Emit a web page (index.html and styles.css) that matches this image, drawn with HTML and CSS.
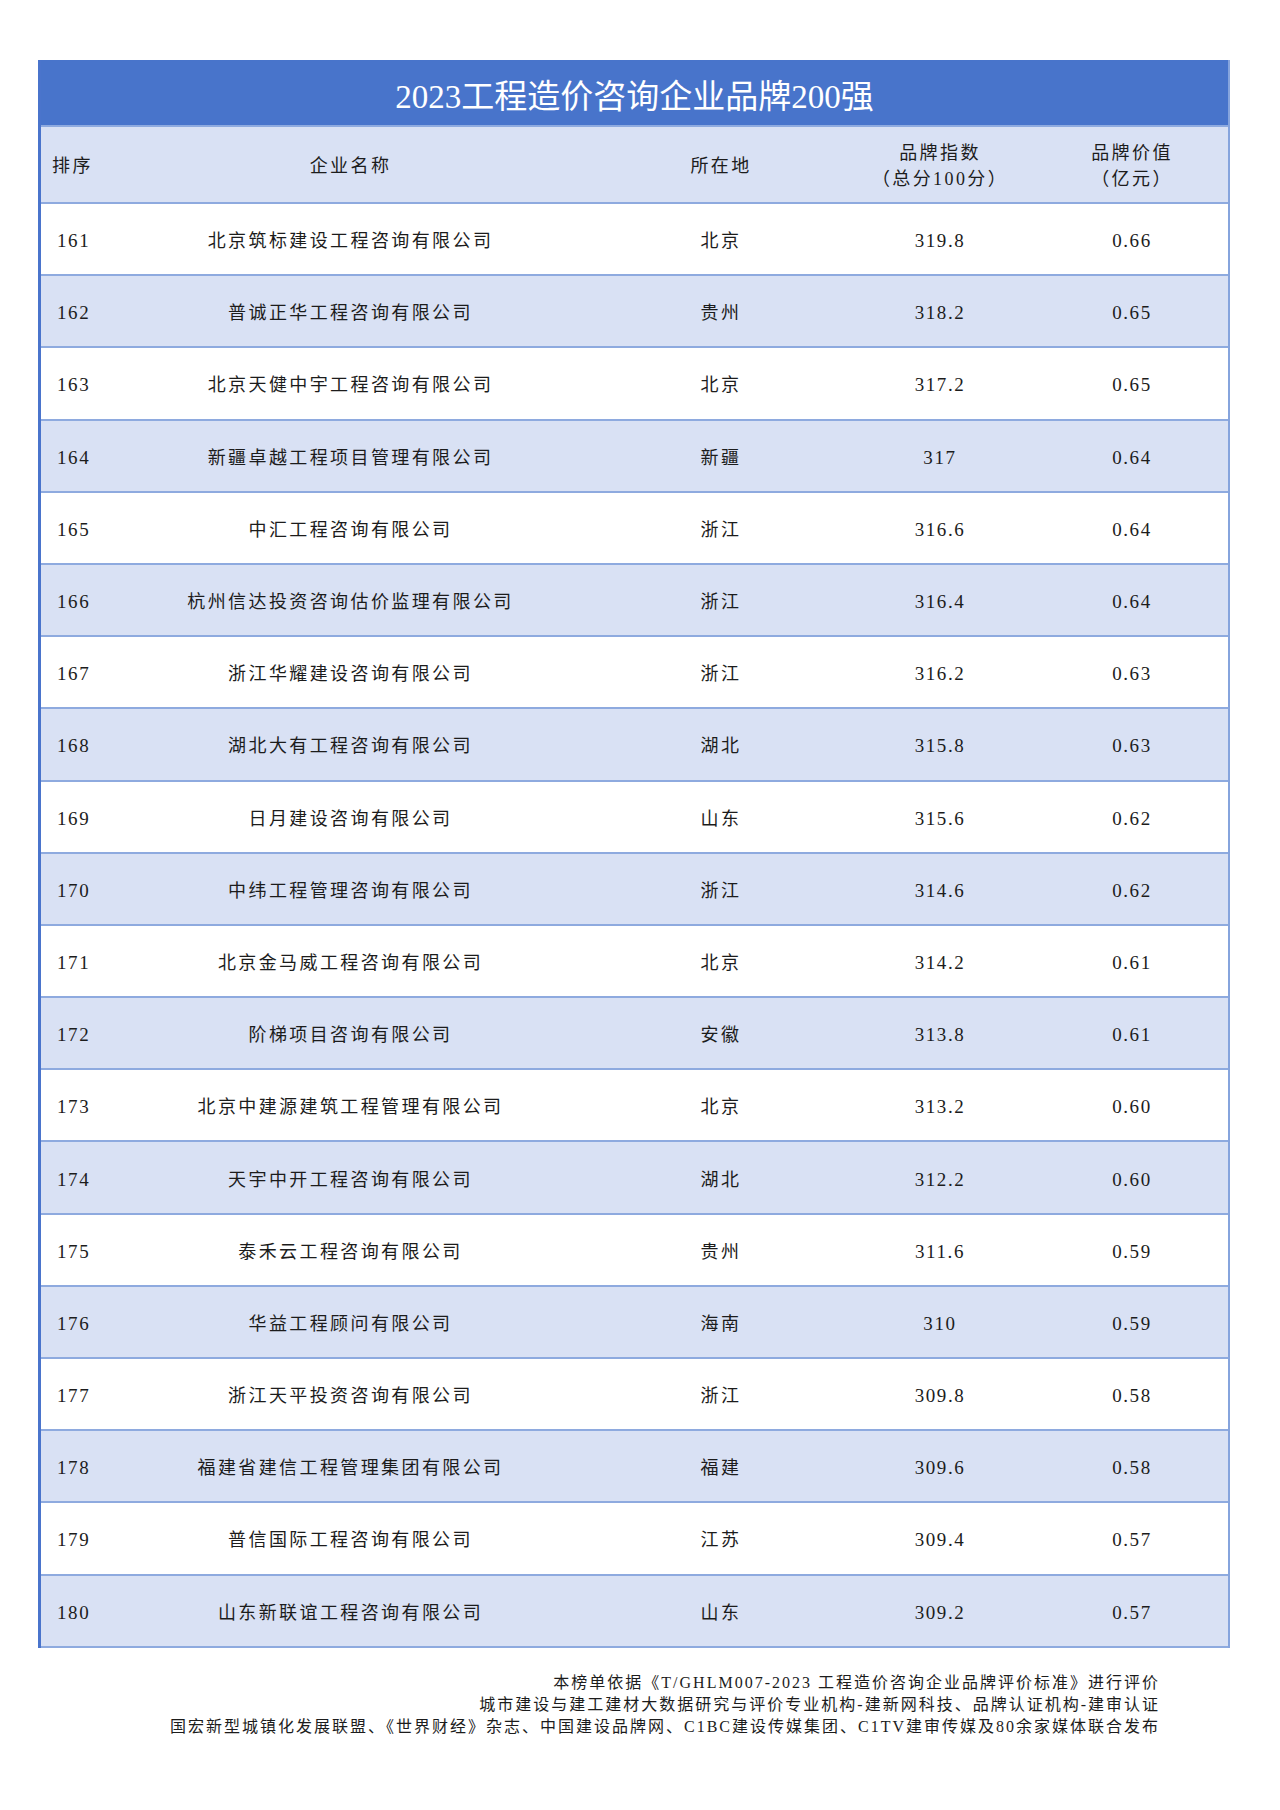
FILE: index.html
```html
<!DOCTYPE html>
<html lang="zh-CN">
<head>
<meta charset="utf-8">
<title>2023工程造价咨询企业品牌200强</title>
<link rel="stylesheet" href="styles.css">
</head>
<body>
<div class="sheet">
  <div class="title">2023工程造价咨询企业品牌200强</div>
  <div class="head">
    <div class="c rank">排序</div>
    <div class="c">企业名称</div>
    <div class="c">所在地</div>
    <div class="c">品牌指数<br>（总分100分）</div>
    <div class="c">品牌价值<br>（亿元）</div>
  </div>
  <div class="row"><div class="c rank">161</div><div class="c">北京筑标建设工程咨询有限公司</div><div class="c">北京</div><div class="c">319.8</div><div class="c">0.66</div></div>
  <div class="row alt"><div class="c rank">162</div><div class="c">普诚正华工程咨询有限公司</div><div class="c">贵州</div><div class="c">318.2</div><div class="c">0.65</div></div>
  <div class="row"><div class="c rank">163</div><div class="c">北京天健中宇工程咨询有限公司</div><div class="c">北京</div><div class="c">317.2</div><div class="c">0.65</div></div>
  <div class="row alt"><div class="c rank">164</div><div class="c">新疆卓越工程项目管理有限公司</div><div class="c">新疆</div><div class="c">317</div><div class="c">0.64</div></div>
  <div class="row"><div class="c rank">165</div><div class="c">中汇工程咨询有限公司</div><div class="c">浙江</div><div class="c">316.6</div><div class="c">0.64</div></div>
  <div class="row alt"><div class="c rank">166</div><div class="c">杭州信达投资咨询估价监理有限公司</div><div class="c">浙江</div><div class="c">316.4</div><div class="c">0.64</div></div>
  <div class="row"><div class="c rank">167</div><div class="c">浙江华耀建设咨询有限公司</div><div class="c">浙江</div><div class="c">316.2</div><div class="c">0.63</div></div>
  <div class="row alt"><div class="c rank">168</div><div class="c">湖北大有工程咨询有限公司</div><div class="c">湖北</div><div class="c">315.8</div><div class="c">0.63</div></div>
  <div class="row"><div class="c rank">169</div><div class="c">日月建设咨询有限公司</div><div class="c">山东</div><div class="c">315.6</div><div class="c">0.62</div></div>
  <div class="row alt"><div class="c rank">170</div><div class="c">中纬工程管理咨询有限公司</div><div class="c">浙江</div><div class="c">314.6</div><div class="c">0.62</div></div>
  <div class="row"><div class="c rank">171</div><div class="c">北京金马威工程咨询有限公司</div><div class="c">北京</div><div class="c">314.2</div><div class="c">0.61</div></div>
  <div class="row alt"><div class="c rank">172</div><div class="c">阶梯项目咨询有限公司</div><div class="c">安徽</div><div class="c">313.8</div><div class="c">0.61</div></div>
  <div class="row"><div class="c rank">173</div><div class="c">北京中建源建筑工程管理有限公司</div><div class="c">北京</div><div class="c">313.2</div><div class="c">0.60</div></div>
  <div class="row alt"><div class="c rank">174</div><div class="c">天宇中开工程咨询有限公司</div><div class="c">湖北</div><div class="c">312.2</div><div class="c">0.60</div></div>
  <div class="row"><div class="c rank">175</div><div class="c">泰禾云工程咨询有限公司</div><div class="c">贵州</div><div class="c">311.6</div><div class="c">0.59</div></div>
  <div class="row alt"><div class="c rank">176</div><div class="c">华益工程顾问有限公司</div><div class="c">海南</div><div class="c">310</div><div class="c">0.59</div></div>
  <div class="row"><div class="c rank">177</div><div class="c">浙江天平投资咨询有限公司</div><div class="c">浙江</div><div class="c">309.8</div><div class="c">0.58</div></div>
  <div class="row alt"><div class="c rank">178</div><div class="c">福建省建信工程管理集团有限公司</div><div class="c">福建</div><div class="c">309.6</div><div class="c">0.58</div></div>
  <div class="row"><div class="c rank">179</div><div class="c">普信国际工程咨询有限公司</div><div class="c">江苏</div><div class="c">309.4</div><div class="c">0.57</div></div>
  <div class="row alt"><div class="c rank">180</div><div class="c">山东新联谊工程咨询有限公司</div><div class="c">山东</div><div class="c">309.2</div><div class="c">0.57</div></div>
</div>
<div class="footer">
  <p>本榜单依据《T/GHLM007-2023 工程造价咨询企业品牌评价标准》进行评价</p>
  <p>城市建设与建工建材大数据研究与评价专业机构-建新网科技、品牌认证机构-建审认证</p>
  <p>国宏新型城镇化发展联盟、《世界财经》杂志、中国建设品牌网、C1BC建设传媒集团、C1TV建审传媒及80余家媒体联合发布</p>
</div>
</body>
</html>
```
FILE: styles.css
```css
* { box-sizing: border-box; }

html, body {
  margin: 0;
  padding: 0;
  background: #ffffff;
}

body {
  width: 1280px;
  font-family: "Liberation Serif", "Noto Sans CJK SC", serif;
  color: #1c1c1c;
}

.sheet {
  margin: 60px 0 0 38px;
  width: 1192px;
  border-left: 3px solid #4a74cc;
  border-right: 2px solid #86a4dd;
}

.title {
  height: 65px;
  background: #4874cb;
  color: #ffffff;
  font-size: 33px;
  display: flex;
  align-items: center;
  justify-content: center;
  padding-top: 3px;
}

.head,
.row {
  display: grid;
  grid-template-columns: 62px 495px 246px 192px 192px;
  align-items: center;
  font-size: 18px;
  letter-spacing: 2.4px;
}

.head {
  height: 79px;
  background: #d9e1f4;
  border-top: 2px solid #8eaadf;
  border-bottom: 2px solid #8eaadf;
  line-height: 26px;
  padding-top: 3px;
}

.row {
  height: 72.2px;
  background: #ffffff;
  border-bottom: 2px solid #8eaadf;
}

.row.alt {
  background: #d9e1f4;
}

.c {
  text-align: center;
  white-space: nowrap;
}

.row .c:nth-child(1),
.row .c:nth-child(4),
.row .c:nth-child(5) {
  font-size: 19px;
  letter-spacing: 1.6px;
  padding-top: 4px;
}

.c.rank {
  text-align: left;
  padding-left: 16px;
}

.head .c.rank {
  padding-left: 11px;
}

.footer {
  width: 1230px;
  margin-top: 24px;
  text-align: right;
  padding-right: 70px;
  font-size: 16px;
  letter-spacing: 2px;
  line-height: 22px;
}

.footer p {
  margin: 0;
}
```
